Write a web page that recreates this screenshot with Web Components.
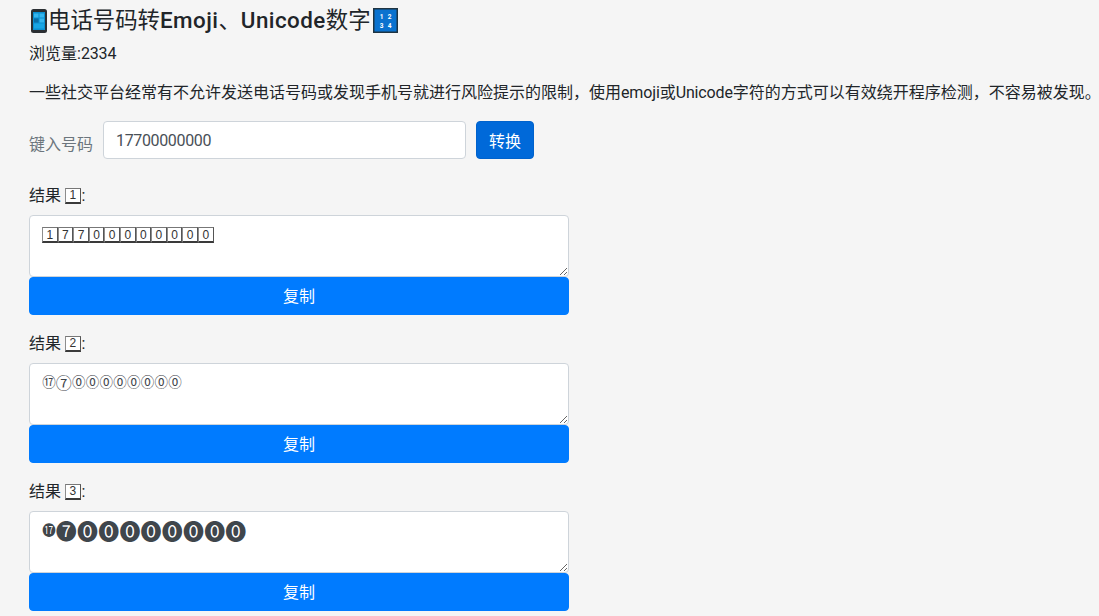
<!DOCTYPE html>
<html lang="zh">
<head>
<meta charset="utf-8">
<title>电话号码转Emoji</title>
<style>
  html, body { margin: 0; background: #f5f5f5; overflow: hidden; }
  body {
    width: 1099px; height: 616px;
    font-family: Roboto, "Noto Sans CJK SC", sans-serif;
    font-size: 16px; color: #212529;
  }
  main-page { padding: 0 0 0 29px; }
</style>
</head>
<body>
<main-page>
  <page-title>电话号码转<b>Emoji</b>、<b>Unicode</b>数字</page-title>
  <plain-line top="9">浏览量:<i>2334</i></plain-line>
  <plain-line top="15">一些社交平台经常有不允许发送电话号码或发现手机号就进行风险提示的限制，使用<i>emoji</i>或<i>Unicode</i>字符的方式可以有效绕开程序检测，不容易被发现。</plain-line>
  <convert-form value="17700000000"></convert-form>
  <result-block index="1" kind="key"></result-block>
  <result-block index="2" kind="ring"></result-block>
  <result-block index="3" kind="solid"></result-block>
</main-page>

<script>
(function () {
  const NUMBER = "17700000000";

  class MainPage extends HTMLElement {
    constructor() {
      super();
      this.attachShadow({ mode: "open" });
      this.shadowRoot.innerHTML = `
        <style>
          :host { display: block; box-sizing: border-box; }
        </style>
        <slot></slot>`;
    }
  }

  class PageTitle extends HTMLElement {
    constructor() {
      super();
      this.attachShadow({ mode: "open" });
      this.shadowRoot.innerHTML = `
        <style>
          :host { display: flex; align-items: center; height: 25px; padding: 8px 0 0 2px;
                  font-size: 22.4px; font-weight: 400; line-height: 25px; color: #212529; }
          svg { display: block; flex: none; }
          .text { margin: 0 2px 0 1px; white-space: nowrap; }
          ::slotted(b) { font-weight: 500; letter-spacing: 0.45px; }
        </style>
        <svg width="16" height="24" viewBox="0 0 16 24">
          <rect x="0" y="0" width="16" height="24" rx="2.5" fill="#2b2f33"/>
          <rect x="2" y="3" width="12" height="18" fill="#0b8fd0"/>
          <rect x="3" y="4.5" width="4.5" height="4" fill="#35b6ee"/>
          <rect x="8.5" y="4.5" width="4.5" height="4" fill="#35b6ee"/>
          <rect x="3" y="9.5" width="4.5" height="4" fill="#0a6fa8"/>
          <rect x="8.5" y="9.5" width="4.5" height="4" fill="#35b6ee"/>
          <rect x="3" y="14.5" width="10" height="5" fill="#18a5e4"/>
        </svg>
        <span class="text"><slot></slot></span>
        <svg width="25" height="25" viewBox="0 0 25 25">
          <rect x="0.75" y="0.75" width="23.5" height="23.5" fill="#0a72cf" stroke="#1f3442" stroke-width="1.5"/>
          <g fill="#fff" font-family="Roboto, sans-serif" font-size="6.5" font-weight="700" text-anchor="middle">
            <text x="8.5" y="11">1</text><text x="16.5" y="11">2</text>
            <text x="8.5" y="19.5">3</text><text x="16.5" y="19.5">4</text>
          </g>
        </svg>`;
    }
  }

  class PlainLine extends HTMLElement {
    constructor() {
      super();
      this.attachShadow({ mode: "open" });
      this.shadowRoot.innerHTML = `
        <style>
          :host { display: block; height: 24px; line-height: 24px; font-size: 16px; white-space: nowrap; }
          ::slotted(i) { font-style: normal; letter-spacing: -0.15px; }
        </style>
        <slot></slot>`;
    }
    connectedCallback() {
      this.style.marginTop = (this.getAttribute("top") || 0) + "px";
    }
  }

  class ConvertForm extends HTMLElement {
    constructor() {
      super();
      this.attachShadow({ mode: "open" });
      this.shadowRoot.innerHTML = `
        <style>
          :host { display: flex; align-items: flex-start; margin-top: 16px; margin-bottom: 25px; }
          label { width: 74px; flex: none; margin-top: 13px; font-size: 16px; line-height: 22px; color: #6c757d; }
          input { box-sizing: border-box; width: 363px; height: 38px; padding: 6px 12px; margin: 0;
                  font: 16px Roboto, sans-serif; letter-spacing: -0.35px; color: #495057; background: #fff;
                  border: 1px solid #ced4da; border-radius: 4px; outline: none; }
          button { box-sizing: border-box; width: 58px; height: 38px; margin-left: 10px; padding: 0;
                   font: 16px Roboto, "Noto Sans CJK SC", sans-serif; color: #fff;
                   background: #0069d9; border: 1px solid #0062cc; border-radius: 4px; }
        </style>
        <label>键入号码</label>
        <input type="text">
        <button type="button">转换</button>`;
      this.shadowRoot.querySelector("input").value = this.getAttribute("value") || "";
    }
  }

  class KeyCap extends HTMLElement {
    constructor() {
      super();
      this.attachShadow({ mode: "open" });
      this.shadowRoot.innerHTML = `
        <style>
          :host { display: inline-flex; box-sizing: border-box; flex: none; width: 15.6px; height: 16px;
                  align-items: center; justify-content: center; background: #fff;
                  border: 1px solid #8d8d8d; border-top-color: #777; border-bottom: 2px solid #3a3a3a; border-right-color: #555;
                  font: 12px/1 "Liberation Sans", sans-serif; color: #333; }
        </style>
        <slot></slot>`;
    }
  }

  class ResultBlock extends HTMLElement {
    constructor() {
      super();
      this.attachShadow({ mode: "open" });
      this.shadowRoot.innerHTML = `
        <style>
          :host { display: block; width: 540px; margin-bottom: 17px; }
          .head { box-sizing: border-box; display: flex; align-items: center; height: 22px; padding-top: 1px; font-size: 16px; line-height: 21px; }
          .head key-cap { margin: 0 1px 0 4px; }
          .box { box-sizing: border-box; height: 62px; margin-top: 9px; padding: 11px 12px; overflow: hidden;
                 resize: vertical; background: #fff; border: 1px solid #ced4da; border-radius: 4px;
                 color: #495057; display: flex; }
          .box.glyphs { padding-top: 9px; }
          .ring { display: flex; align-items: center; height: 18px;
                  font: 13.5px/1 "Noto Sans CJK SC", "DejaVu Sans", sans-serif; color: #3f464c; }
          .g { display: block; width: 13.75px; text-align: center; flex: none; }
          .t { display: block; width: 16px; text-align: center; flex: none; font-size: 16px; }
          .s { display: block; width: 21.2px; text-align: center; flex: none; font-size: 21px; }
          .copy { box-sizing: border-box; display: block; width: 100%; height: 38px; padding: 0 0 2px;
                  font: 16px Roboto, "Noto Sans CJK SC", sans-serif; color: #fff;
                  background: #007bff; border: 1px solid #007bff; border-radius: 4px; }
        </style>
        <div class="head">结果<key-cap id="cap"></key-cap>:</div>
        <div class="box" id="box"></div>
        <button class="copy" type="button">复制</button>`;
    }
    connectedCallback() {
      const index = this.getAttribute("index");
      const kind = this.getAttribute("kind");
      const root = this.shadowRoot;
      const box = root.getElementById("box");
      root.getElementById("cap").textContent = index;
      if (kind === "key") {
        box.innerHTML = NUMBER.split("").map((d) => `<key-cap>${d}</key-cap>`).join("");
      } else if (kind === "ring") {
        box.classList.add("glyphs");
        box.innerHTML = `<span class="ring"><span class="g">⑰</span><span class="t">⑦</span>${"<span class='g'>⓪</span>".repeat(8)}</span>`;
      } else {
        box.classList.add("glyphs");
        box.innerHTML = `<span class="ring"><span class="g">⓱</span><span class="s">❼</span>${"<span class='s'>⓿</span>".repeat(8)}</span>`;
      }
    }
  }

  customElements.define("main-page", MainPage);
  customElements.define("page-title", PageTitle);
  customElements.define("plain-line", PlainLine);
  customElements.define("convert-form", ConvertForm);
  customElements.define("key-cap", KeyCap);
  customElements.define("result-block", ResultBlock);
})();
</script>
</body>
</html>
